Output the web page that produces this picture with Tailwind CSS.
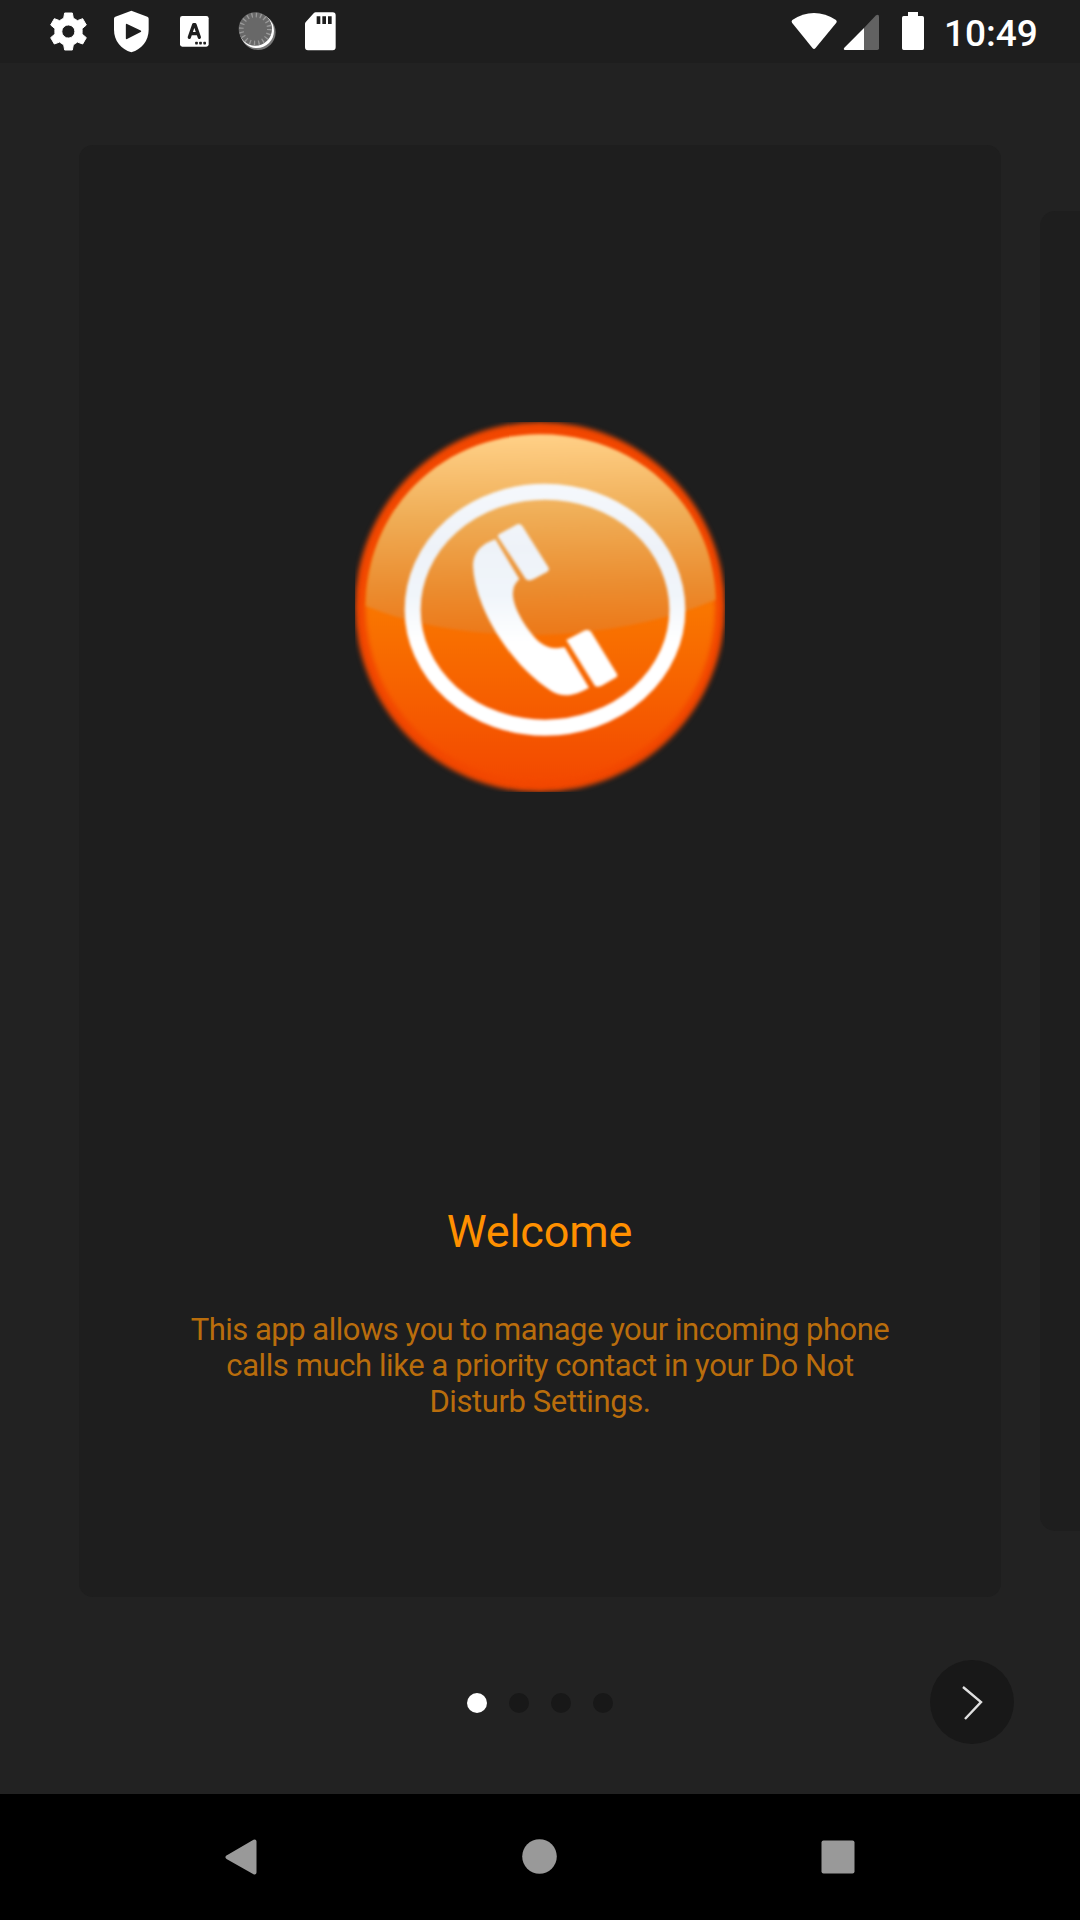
<!DOCTYPE html>
<html lang="en">
<head>
<meta charset="utf-8">
<title>Welcome</title>
<script src="https://cdn.jsdelivr.net/npm/@tailwindcss/browser@4"></script>
</head>
<body class="bg-[#222222] font-['Roboto',sans-serif]">
<div class="w-[1080px] h-[1920px] flex flex-col overflow-hidden bg-[#222222]">
  <header class="h-[63px] shrink-0 bg-[#1e1e1e] flex justify-between pl-[37px] pr-[43px] text-white">
    <div class="flex">
      <!-- settings -->
      <svg class="size-[63px]" viewBox="21 0 189 189"><path fill="#fff" stroke="#fff" stroke-width="3" stroke-linejoin="round" fill-rule="evenodd" d="M104 39H127L130 55Q137 58 142 62L158 56L169 75L156 86Q157 94 156 102L169 113L158 132L142 126Q137 131 130 134L127 150H104L101 134Q94 131 89 126L73 132L62 113L75 102Q74 94 75 86L62 75L73 56L89 62Q94 58 101 55ZM115 75A19.500 19.500 0 1 0 115.100 75Z"/></svg>
      <!-- play protect -->
      <svg class="size-[63px]" viewBox="210 0 189 189"><path fill="#fff" d="M304 32L352 50Q356 52 356 56V89C356 123 335 147 304 157C273 147 252 123 252 89V56Q252 52 256 50Z"/><path fill="#1e1e1e" stroke="#1e1e1e" stroke-width="5" stroke-linejoin="round" d="M290 74L331 94L290 115Z"/></svg>
      <!-- input method -->
      <svg class="size-[63px]" viewBox="399 0 189 189"><rect x="450" y="48" width="86" height="92" rx="7" fill="#fff"/><path fill="none" stroke="#1e1e1e" stroke-width="10" stroke-linecap="round" stroke-linejoin="round" d="M478 112L491 74H495L508 112M484 101H502"/><g fill="#1e1e1e"><rect x="495.500" y="125.500" width="8" height="8" rx="2"/><rect x="507.500" y="125.500" width="8" height="8" rx="2"/><rect x="520" y="125.500" width="8" height="8" rx="2"/></g></svg>
      <!-- progress -->
      <svg class="size-[63px]" viewBox="588 0 189 189"><circle cx="684" cy="97" r="53" fill="#777"/><circle cx="680.500" cy="92.500" r="51.500" fill="#fff"/><circle cx="676" cy="87" r="50" fill="#686868"/><circle cx="676" cy="87" r="42" fill="none" stroke="#999" stroke-width="14" stroke-dasharray="4 9.194"/></svg>
      <!-- sd card -->
      <svg class="size-[63px]" viewBox="777 0 189 189"><path fill="#fff" d="M857 37H908Q917 37 917 46V142Q917 151 908 151H834Q825 151 825 142V71Q825 68 828 65L851 40Q854 37 857 37Z"/><path fill="#1e1e1e" d="M860 49h11v23h-11zM877 49h11v23h-11zM894 49h11v23h-11z"/></svg>
    </div>
    <div class="flex">
      <svg class="w-[50px] h-[63px]" viewBox="60 0 150 189"><path fill="#fff" d="M67 60Q98 39 132 39T198 60Q202 64 199 68L136 145Q132 149 128 145L66 68Q63 64 67 60Z"/></svg>
      <svg class="w-[50px] h-[63px]" viewBox="210 0 150 189"><path fill="#626262" d="M282 84L318 46Q327 41 327 50V145Q327 150 322 150H282Z"/><path fill="#fff" d="M282 84V150H225Q219 148 223 143Z"/></svg>
      <svg class="w-[54px] h-[63px]" viewBox="360 0 162 189"><path fill="#fff" d="M414 36H444V48H457Q462 48 462 53V145Q462 150 457 150H401Q396 150 396 145V53Q396 48 401 48H414Z"/></svg>
      <span class="w-[93px] whitespace-nowrap text-[37px] leading-[67px] font-medium">10:49</span>
    </div>
  </header>

  <main class="flex items-center gap-[39px] pl-[79px] pt-[82px]">
    <section class="w-[922px] h-[1452px] shrink-0 rounded-[14px] bg-[#1e1e1e] flex flex-col items-center pt-[265px]">
      <svg class="size-[400px] shrink-0" viewBox="0 0 1200 1200">
        <defs>
          <linearGradient id="base" x1="0" y1="0" x2="0" y2="1"><stop offset="0" stop-color="#f94a00"/><stop offset=".5" stop-color="#f97600"/><stop offset=".75" stop-color="#f66000"/><stop offset="1" stop-color="#f34900"/></linearGradient>
          <linearGradient id="gloss" gradientUnits="userSpaceOnUse" x1="590" y1="75" x2="600" y2="675"><stop offset="0" stop-color="#ffd087"/><stop offset=".4" stop-color="#efad56"/><stop offset=".75" stop-color="#eb8d30"/><stop offset="1" stop-color="#ec7818"/></linearGradient>
          <linearGradient id="white" gradientUnits="userSpaceOnUse" x1="0" y1="220" x2="0" y2="700"><stop offset="0" stop-color="#f5f8fc"/><stop offset=".4" stop-color="#eef2f8"/><stop offset=".7" stop-color="#f0f5fa"/><stop offset="1" stop-color="#fff"/></linearGradient>
          <filter id="soft" x="-5%" y="-5%" width="110%" height="110%" color-interpolation-filters="sRGB"><feGaussianBlur stdDeviation="4"/></filter>
          <filter id="edge" x="-5%" y="-5%" width="110%" height="110%" color-interpolation-filters="sRGB"><feGaussianBlur stdDeviation="8"/></filter>
          <clipPath id="frame"><rect x="45" y="36" width="1110" height="1110"/></clipPath>
        </defs>
        <g clip-path="url(#frame)">
          <circle cx="600" cy="591" r="555" fill="#f24700" filter="url(#edge)"/>
          <ellipse cx="601" cy="593" rx="525" ry="523" fill="url(#base)" filter="url(#edge)"/>
          <path filter="url(#soft)" fill="url(#gloss)" d="M78 588C80 290 310 73 601 73C892 73 1122 290 1126 570Q880 670 580 676Q280 672 78 588Z"/>
          <g filter="url(#soft)">
            <ellipse cx="615" cy="599" rx="397" ry="354" fill="none" stroke="url(#white)" stroke-width="48"/>
            <path fill="url(#white)" d="M474 380Q472 376 478 372L532 343Q541 340 547 348L625 472Q629 480 622 485L580 508Q565 515 557 507Z"/>
            <path fill="url(#white)" d="M466 388L538 507Q516 527 519 558C523 600 560 660 597 695Q625 716 651 715L674 712L747 833C710 855 670 865 635 844C550 790 470 690 428 588Q400 520 399 465C401 425 425 402 466 388Z"/>
            <path fill="#fff" d="M679 690L735 661Q747 657 754 667L831 792Q834 798 829 802L785 827Q772 833 765 828Z"/>
          </g>
        </g>
      </svg>
      <h1 class="mt-[392px] pr-[1px] text-[45px] leading-[60px] tracking-[-0.15px] text-[#ff9000]">Welcome</h1>
      <p class="mt-[50px] w-[720px] whitespace-nowrap text-center text-[31px] leading-[36px] tracking-[-0.41px] text-[#b96d0c]"><span class="tracking-[-0.5px]">This app allows you to manage your incoming phone</span><br>calls much like a priority contact in your Do Not<br>Disturb Settings.</p>
    </section>
    <section class="w-[922px] h-[1320px] shrink-0 rounded-[15px] bg-[#1e1e1e]"></section>
  </main>

  <footer class="flex-1 grid grid-cols-[1fr_auto_1fr] items-center pt-[13px] px-[66px]">
    <span></span>
    <div class="flex gap-[22px] pt-[2px]">
      <i class="size-5 rounded-full bg-white"></i>
      <i class="size-5 rounded-full bg-[#181818]"></i>
      <i class="size-5 rounded-full bg-[#181818]"></i>
      <i class="size-5 rounded-full bg-[#181818]"></i>
    </div>
    <button class="justify-self-end size-[84px] rounded-full bg-[#181818]" aria-label="Next">
      <svg class="size-[84px]" viewBox="0 0 84 84"><path d="M33 27L51 42L35 59" fill="none" stroke="#e0e0e0" stroke-width="2.400"/></svg>
    </button>
  </footer>

  <nav class="h-[126px] shrink-0 bg-black flex justify-center">
    <div class="w-[897px] grid grid-cols-3 justify-items-center items-center">
      <svg class="size-[48px]" viewBox="0 0 48 48"><path fill="#999" stroke="#999" stroke-width="4" stroke-linejoin="round" d="M10.500 24.200L37.500 8.500V39.500Z"/></svg>
      <svg class="size-[48px]" viewBox="0 0 48 48"><circle cx="23.500" cy="23.500" r="17.300" fill="#999"/></svg>
      <svg class="size-[48px]" viewBox="0 0 48 48"><rect x="6.500" y="7.500" width="33" height="33" rx="2" fill="#999"/></svg>
    </div>
  </nav>
</div>
</body>
</html>
